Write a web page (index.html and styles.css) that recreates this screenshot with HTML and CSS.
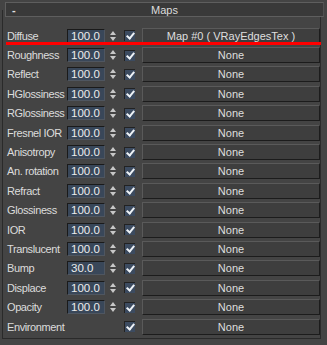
FILE: index.html
```html
<!DOCTYPE html>
<html lang="en">
<head>
<meta charset="UTF-8">
<title>Maps</title>
<link rel="stylesheet" href="styles.css">
</head>
<body>

  <div class="rollout-head"><span class="toggle">-</span><span class="title">Maps</span></div>

  <div class="rollout">
    <div class="row"><span class="lbl">Diffuse</span><span class="num">100.0</span><span class="spin"></span><span class="chk"></span><span class="map">Map #0 ( VRayEdgesTex )</span></div>
    <div class="row"><span class="lbl">Roughness</span><span class="num">100.0</span><span class="spin"></span><span class="chk"></span><span class="map">None</span></div>
    <div class="row"><span class="lbl">Reflect</span><span class="num">100.0</span><span class="spin"></span><span class="chk"></span><span class="map">None</span></div>
    <div class="row"><span class="lbl">HGlossiness</span><span class="num">100.0</span><span class="spin"></span><span class="chk"></span><span class="map">None</span></div>
    <div class="row"><span class="lbl">RGlossiness</span><span class="num">100.0</span><span class="spin"></span><span class="chk"></span><span class="map">None</span></div>
    <div class="row"><span class="lbl">Fresnel IOR</span><span class="num">100.0</span><span class="spin"></span><span class="chk"></span><span class="map">None</span></div>
    <div class="row"><span class="lbl">Anisotropy</span><span class="num">100.0</span><span class="spin"></span><span class="chk"></span><span class="map">None</span></div>
    <div class="row"><span class="lbl">An. rotation</span><span class="num">100.0</span><span class="spin"></span><span class="chk"></span><span class="map">None</span></div>
    <div class="row"><span class="lbl">Refract</span><span class="num">100.0</span><span class="spin"></span><span class="chk"></span><span class="map">None</span></div>
    <div class="row"><span class="lbl">Glossiness</span><span class="num">100.0</span><span class="spin"></span><span class="chk"></span><span class="map">None</span></div>
    <div class="row"><span class="lbl">IOR</span><span class="num">100.0</span><span class="spin"></span><span class="chk"></span><span class="map">None</span></div>
    <div class="row"><span class="lbl">Translucent</span><span class="num">100.0</span><span class="spin"></span><span class="chk"></span><span class="map">None</span></div>
    <div class="row"><span class="lbl">Bump</span><span class="num">30.0</span><span class="spin"></span><span class="chk"></span><span class="map">None</span></div>
    <div class="row"><span class="lbl">Displace</span><span class="num">100.0</span><span class="spin"></span><span class="chk"></span><span class="map">None</span></div>
    <div class="row"><span class="lbl">Opacity</span><span class="num">100.0</span><span class="spin"></span><span class="chk"></span><span class="map">None</span></div>
    <div class="row"><span class="lbl wide">Environment</span><span class="chk"></span><span class="map">None</span></div>
  </div>

  <!-- annotation -->
  <div class="redline"></div>

</body>
</html>
```

FILE: styles.css
```css
body{
  margin:0;
  background:#444444;
  font-family:"Liberation Sans", Arial, sans-serif;
  font-size:11px;
  color:#dcdcdc;
  width:327px;
  height:345px;
  overflow:hidden;
  position:relative;
}
div.rollout-head{
  position:relative;
  z-index:1;
  margin:2px 3px 0 5px;
  height:13px;
  border:1px solid #5e5e5e;
  border-right-color:#505050;
  background:#393939;
  display:flex;
  align-items:center;
}
span.toggle{
  width:12px;
  padding-left:6px;
  font-weight:bold;
  color:#e0e0e0;
}
span.title{
  flex:1;
  text-align:center;
  margin-right:18px;
}
div.rollout{
  margin:-7px 6px 0 2px;
  height:329px;
  box-sizing:border-box;
  border:1px solid #2a2a2a;
  border-top:none;
  padding:16px 0 0 4px;
}
div.row{
  height:19.4px;
  display:grid;
  grid-template-columns:60px 38px 15px 18px 1fr;
  align-items:center;
}
span.lbl{
  white-space:nowrap;
  letter-spacing:-0.4px;
}
span.lbl.wide{ grid-column:1 / 4; }
span.num{
  height:14px;
  box-sizing:border-box;
  border-top:1px solid #1a1a1a;
  border-left:1px solid #1a1a1a;
  border-right:1px solid #4f5660;
  border-bottom:1px solid #4f5660;
  background:#394759;
  color:#ececec;
  font-size:11.5px;
  line-height:12px;
  padding-left:3px;
}
span.spin{
  height:14px;
  margin-left:4px;
  position:relative;
}
span.spin::before,
span.spin::after{
  content:"";
  position:absolute;
  left:1px;
  border-left:3.5px solid transparent;
  border-right:3.5px solid transparent;
}
span.spin::before{
  top:2px;
  border-bottom:4px solid #c8c8c8;
}
span.spin::after{
  top:8px;
  border-top:4px solid #c8c8c8;
}
span.chk{
  width:11px;
  height:11px;
  box-sizing:border-box;
  margin-left:4px;
  border-top:1px solid #222;
  border-left:1px solid #222;
  background:#3c4b60;
  position:relative;
}
span.chk::after{
  content:"";
  position:absolute;
  left:3px;
  top:0px;
  width:3px;
  height:6px;
  border-right:2px solid #eef2f6;
  border-bottom:2px solid #eef2f6;
  transform:rotate(40deg);
}
span.map{
  margin-left:4px;
  height:16px;
  box-sizing:border-box;
  border-top:1px solid #5a5a5a;
  border-left:1px solid #5a5a5a;
  border-right:1px solid #1c1c1c;
  border-bottom:1px solid #1c1c1c;
  background:#3e3e3e;
  text-align:center;
  line-height:14px;
  font-size:11px;
  color:#dedede;
  white-space:nowrap;
}
div.redline{
  position:absolute;
  left:6px;
  top:42px;
  width:315px;
  height:3px;
  background:#ff0000;
}
```
